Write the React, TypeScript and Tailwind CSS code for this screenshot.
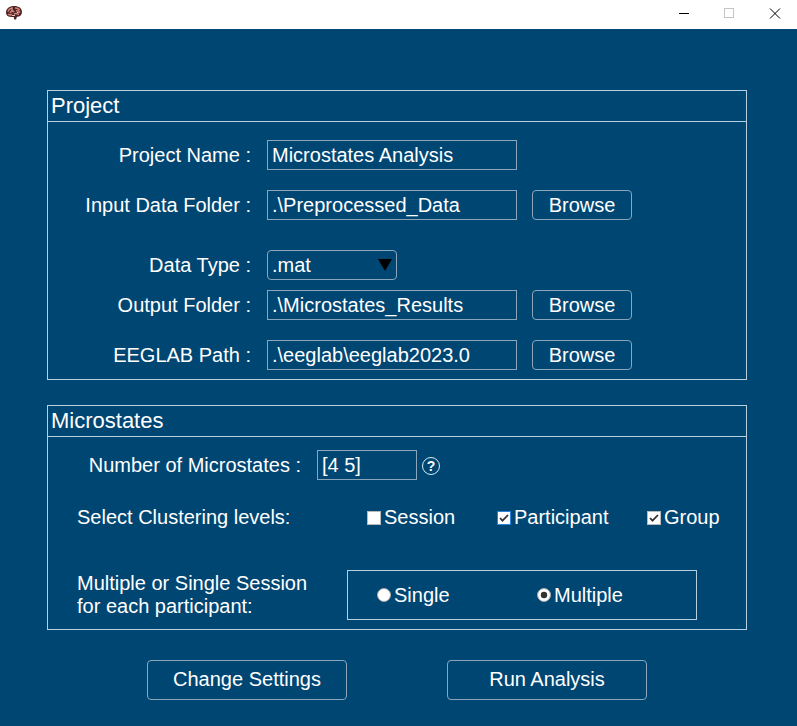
import type { ReactNode } from "react";

function BrainIcon() {
  return (
    <svg width="18" height="16" viewBox="0 0 18 16" className="ml-[5px]">
      <path d="M1 7.500C1 3.500 4.500 1 9 1c5 0 8 2.300 8 6 0 3-2 4.700-5 4.700l-1 2.800H9.300L8.600 12C5.500 12 1 12 1 7.500Z" fill="#4a2826" />
      <path d="M3 6.500c1-2.500 3-3.500 5-3.500M5 8c1-2 3-2.500 4-1M10 3c2 0 3.500.5 4.500 2M11 6c1.500-.5 3 0 4 1.500M3 9c1 1 2.500 1 4 .5M9 9c1.500-1 3-.5 5 .5" fill="none" stroke="#d97f78" strokeWidth="1.600" />
      <path d="M6 5h2M12 7.500h1.500M7 10.500h3" stroke="#ecc0bb" strokeWidth="1" />
    </svg>
  );
}

function TitleBar() {
  return (
    <header className="flex h-[29px] items-start justify-between bg-white">
      <div className="pt-[5px]"><BrainIcon /></div>
      <svg width="137" height="28" viewBox="0 0 137 28" shapeRendering="crispEdges">
        <path d="M19 13.500h10" stroke="#000" />
        <rect x="64.500" y="8.500" width="9" height="9" fill="none" stroke="#c4c4c4" />
        <path d="m110 8.500 10 10m0-10-10 10" stroke="#000" strokeWidth="1" shapeRendering="auto" />
      </svg>
    </header>
  );
}

function Panel({ title, className, children }: { title: string; className: string; children: ReactNode }) {
  return (
    <section className={`ml-[47px] w-[700px] border border-[#b7d0e0] ${className}`}>
      <h2 className="h-[31px] border-b border-[#b7d0e0] pl-[3px] text-[22px] leading-[30px]">{title}</h2>
      {children}
    </section>
  );
}

function Field({ label, value, browse, className }: { label: string; value: string; browse?: boolean; className: string }) {
  return (
    <div className={`flex h-[30px] ${className}`}>
      <span className="w-[203px] text-right leading-[30px]">{label}</span>
      <div className="ml-4 w-[250px] border border-[#8ba5ba] pl-1 leading-[28px]">{value}</div>
      {browse && <button className="ml-[15px] w-[100px] rounded-[4px] border border-[#8ba5ba] leading-[28px]">Browse</button>}
    </div>
  );
}

function Check({ label, checked, focused, className }: { label: string; checked?: boolean; focused?: boolean; className: string }) {
  return (
    <label className={`flex ${className}`}>
      <svg width="14" height="14" viewBox="0 0 14 14" className="mt-[9px] mr-[3px]">
        <rect x="0.500" y="0.500" width="13" height="13" fill="#fff" stroke={focused ? "#2784de" : "#b9b9b9"} />
        {checked && <path d="m3 7 2.500 2.700L11 4" fill="none" stroke="#333" strokeWidth="1.800" />}
      </svg>
      {label}
    </label>
  );
}

function Radio({ label, checked, className }: { label: string; checked?: boolean; className: string }) {
  return (
    <label className={`flex ${className}`}>
      <svg width="14" height="14" viewBox="0 0 14 14" className="mt-[8px] mr-[3px]">
        <circle cx="7" cy="7" r="6.500" fill="#fff" stroke="#a9a9a9" />
        {checked && <circle cx="7" cy="7" r="3.200" fill="#333" />}
      </svg>
      {label}
    </label>
  );
}

export default function App() {
  return (
    <div className="h-[726px] w-[797px] overflow-hidden bg-[#004673] font-['Liberation_Sans',Arial,sans-serif] text-[20px] text-white">
      <TitleBar />
      <Panel title="Project" className="mt-[61px] h-[290px]">
        <Field label="Project Name :" value="Microstates Analysis" className="mt-[18px]" />
        <Field label="Input Data Folder :" value=".\Preprocessed_Data" browse className="mt-5" />
        <div className="mt-[30px] flex h-[30px]">
          <span className="w-[203px] text-right leading-[30px]">Data Type :</span>
          <div className="ml-4 flex w-[130px] justify-between rounded-[4px] border border-[#8ba5ba] pr-[4px] pl-1 leading-[28px]">
            .mat
            <svg width="14" height="12" viewBox="0 0 14 12" className="mt-[8px]"><path d="M0 0h14L7 12Z" fill="#000" /></svg>
          </div>
        </div>
        <Field label="Output Folder :" value=".\Microstates_Results" browse className="mt-[10px]" />
        <Field label="EEGLAB Path :" value=".\eeglab\eeglab2023.0" browse className="mt-5" />
      </Panel>
      <Panel title="Microstates" className="mt-[25px] h-[225px]">
        <div className="mt-[13px] flex h-[30px]">
          <span className="w-[253px] text-right leading-[30px]">Number of Microstates :</span>
          <div className="ml-4 w-[100px] border border-[#8ba5ba] pl-1 leading-[28px]">[4 5]</div>
          <span className="mt-[7px] ml-[5px] flex h-[18px] w-[18px] items-center justify-center rounded-full border border-[#d8ecf5] text-[14px] leading-[16px] font-bold">?</span>
        </div>
        <div className="mt-[22px] flex h-[30px] pl-[29px] leading-[30px]">
          <span className="w-[290px]">Select Clustering levels:</span>
          <Check label="Session" className="w-[130px]" />
          <Check label="Participant" checked focused className="w-[150px]" />
          <Check label="Group" checked className="" />
        </div>
        <div className="mt-[38px] flex h-[50px] pl-[29px]">
          <p className="w-[270px] pt-[2px] leading-[23px]">Multiple or Single Session<br />for each participant:</p>
          <div className="flex w-[350px] border border-[#b7d0e0] pt-[9px] pl-[29px] leading-[30px]">
            <Radio label="Single" className="w-[160px]" />
            <Radio label="Multiple" checked className="" />
          </div>
        </div>
      </Panel>
      <div className="mt-[30px] ml-[147px] flex gap-[100px]">
        <button className="h-[40px] w-[200px] rounded-[4px] border border-[#8ba5ba] pb-[2px]">Change Settings</button>
        <button className="h-[40px] w-[200px] rounded-[4px] border border-[#8ba5ba] pb-[2px]">Run Analysis</button>
      </div>
    </div>
  );
}
